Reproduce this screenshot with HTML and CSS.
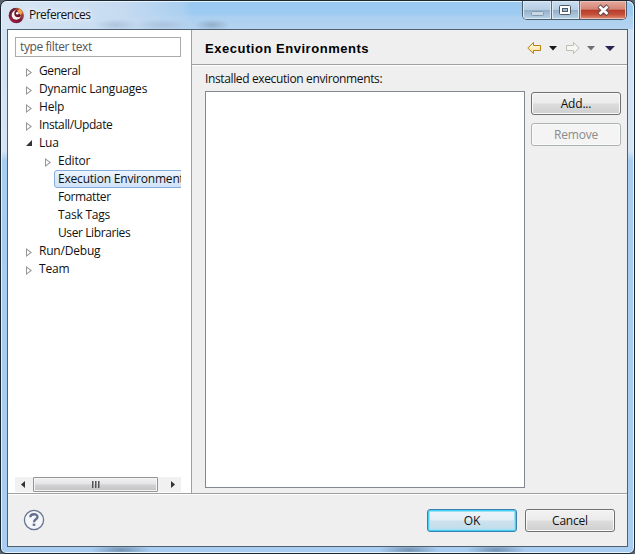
FILE: index.html
```html
<!DOCTYPE html>
<html lang="en">
<head>
<meta charset="utf-8">
<title>Preferences</title>
<link rel="stylesheet" href="styles.css">
</head>
<body>
<div class="window">
  <header class="titlebar">
    <svg class="logo" width="17" height="17" viewBox="0 0 17 17">
      <defs><linearGradient id="lg" x1="0" y1="1" x2="1" y2="0"><stop offset="0" stop-color="#b02848"/><stop offset=".45" stop-color="#74183a"/><stop offset=".75" stop-color="#a84838"/><stop offset="1" stop-color="#f0a040"/></linearGradient></defs>
      <circle cx="8.300" cy="8.500" r="7.700" fill="url(#lg)"/>
      <path d="M1.500 5.500A7.500 7.500 0 0 1 8 1L5 5L2.500 10Z" fill="#6a2036"/>
      <circle cx="8.300" cy="8" r="4.700" fill="#fff3ee"/>
      <circle cx="10" cy="6.500" r="3.700" fill="#6b1730"/>
      <path d="M9 3.500L12 2L14.500 5L13 8.500L11 6.500Z" fill="#f0a54c"/>
      <circle cx="9.300" cy="6.300" r="1.300" fill="#fff"/>
    </svg>
    <span class="title">Preferences</span>
    <div class="captions">
      <span class="cap min"><svg width="28" height="18"><rect x="8.500" y="10.500" width="12" height="4" rx="1" fill="#c9d9e6" stroke="#8498ab"/></svg></span>
      <span class="cap max"><svg width="27" height="18"><rect x="7.500" y="4.500" width="11" height="9" rx="1" fill="#fff" stroke="#4e5a68"/><rect x="10.500" y="7.500" width="5" height="3" fill="#9fb9cf" stroke="#4e5a68"/></svg></span>
      <span class="cap close"><svg width="46" height="18"><path d="M19 5L28 13.500M28 5L19 13.500" stroke="#64474a" stroke-width="4.500"/><path d="M19.500 5.500L27.500 13M27.500 5.500L19.500 13" stroke="#fff" stroke-width="2.700"/></svg></span>
    </div>
  </header>
  <main class="client">
    <div class="body">
      <aside class="sidebar">
        <div class="filter">type filter text</div>
        <ul class="tree">
          <li><i class="tw"></i><span class="tight">General</span></li>
          <li><i class="tw"></i><span>Dynamic Languages</span></li>
          <li><i class="tw"></i><span>Help</span></li>
          <li><i class="tw"></i><span class="tight">Install/Update</span></li>
          <li><i class="tw open"></i><span>Lua</span></li>
          <li class="sub"><i class="tw"></i><span>Editor</span></li>
          <li class="sub sel"><i class="tw none"></i><span>Execution Environments</span></li>
          <li class="sub"><i class="tw none"></i><span class="tight">Formatter</span></li>
          <li class="sub"><i class="tw none"></i><span>Task Tags</span></li>
          <li class="sub"><i class="tw none"></i><span class="tight">User Libraries</span></li>
          <li><i class="tw"></i><span>Run/Debug</span></li>
          <li><i class="tw"></i><span>Team</span></li>
        </ul>
        <div class="scroll">
          <svg width="18" height="15"><path d="M10 4V11L6 7.500Z" fill="#333"/></svg>
          <div class="thumb"><i></i><i></i><i></i></div>
          <svg width="23" height="15"><path d="M13 4V11L17 7.500Z" fill="#333"/></svg>
        </div>
      </aside>
      <section class="page">
        <div class="head">
          <h1>Execution Environments</h1>
          <svg class="nav" width="100" height="20" viewBox="0 0 100 20">
            <defs><linearGradient id="ag" x1="0" y1="0" x2="0" y2="1"><stop offset="0" stop-color="#fffdf0"/><stop offset="1" stop-color="#fbe08c"/></linearGradient></defs>
            <path d="M6.500 4.500L.8 10L6.500 15.500V12.500H13.500V7.500H6.500Z" fill="url(#ag)" stroke="#b98018"/>
            <path d="M22 8H30L26 12.500Z" fill="#181818"/>
            <path d="M46.500 4.500L52.200 10L46.500 15.500V12.500H39.500V7.500H46.500Z" fill="#f6f6f3" stroke="#bdbdb8"/>
            <path d="M60 8H68L64 12.500Z" fill="#6f6f6f"/>
            <path d="M78 8H88L83 13Z" fill="#25254f"/>
          </svg>
        </div>
        <div class="content">
          <div class="label">Installed execution environments:</div>
          <div class="cols">
            <div class="list"></div>
            <div class="actions">
              <button class="btn">Add...</button>
              <button class="btn off" disabled>Remove</button>
            </div>
          </div>
        </div>
      </section>
    </div>
    <footer class="foot">
      <svg class="help" width="22" height="22" viewBox="0 0 22 22"><circle cx="11" cy="11" r="9.600" fill="#f4f6fa" stroke="#66758f" stroke-width="1.300"/><path d="M7.300 8.200C7.500 4.300 14.500 4.300 14.500 8C14.500 10.300 11 10.300 11 13.200" fill="none" stroke="#60718f" stroke-width="2.300"/><rect x="9.700" y="14.600" width="2.600" height="2.300" fill="#60718f"/></svg>
      <button class="btn ok">OK</button>
      <button class="btn">Cancel</button>
    </footer>
  </main>
</div>
</body>
</html>
```
FILE: styles.css
```css
* { box-sizing: border-box; }
body {
  margin: 0;
  width: 635px;
  height: 554px;
  overflow: hidden;
  background: #59636d;
  font: 12px/18px "Open Sans", "Noto Sans", sans-serif;
  letter-spacing: -0.2px;
  color: #111;
}
.window {
  width: 635px;
  height: 554px;
  padding: 0 6px 6px 6px;
  border: 1px solid #1c2630;
  border-radius: 7px 7px 6px 6px;
  box-shadow: inset 0 0 0 1px #e4f2fc;
  background:
    radial-gradient(ellipse 30px 6px at 120px 549px, #7592b0, transparent),
    radial-gradient(ellipse 30px 6px at 408px 549px, #7592b0, transparent),
    radial-gradient(ellipse 30px 6px at 495px 549px, #7592b0, transparent),
    linear-gradient(#cfe1f4, #d5e5f6 150px, #a6cdf2 160px, #a9cdf0);
}
.titlebar {
  display: flex;
  align-items: flex-start;
  height: 28px;
  margin: 0 -5px;
  padding-left: 6px;
  border-radius: 6px 6px 0 0;
  border-top: 1px solid #e8f4fc;
  background:
    radial-gradient(ellipse 22px 6px at 114px 23px, #a3b9d4aa, transparent),
    radial-gradient(ellipse 28px 6px at 160px 23px, #a3b9d4aa, transparent),
    radial-gradient(ellipse 18px 6px at 210px 23px, #8ba5c2cc, transparent),
    linear-gradient(90deg, #d8e6f4, #c6dbf1 120px, #b8d4f088 180px, transparent 190px),
    linear-gradient(#98c8f0, #9ecbf2 12px, #acd0f0 15px, #b4d3f0);
}
.logo { margin: 5px 4px 0 0; }
.title { padding-top: 4px; letter-spacing: -0.5px; text-shadow: 0 0 5px #fff, 0 0 8px #fff; }
.captions {
  display: flex;
  margin: -1px 6px 0 auto;
  height: 19px;
  border: 1px solid #4a5b6c;
  border-top: 0;
  border-radius: 0 0 5px 5px;
  overflow: hidden;
}
.cap { display: flex; box-shadow: inset 0 0 0 1px #dceaf6; }
.min, .max { border-right: 1px solid #5b6c7d; background: linear-gradient(#cadef0, #b6cde2 48%, #94b0c9 52%, #b9d3e8); }
.close { background: linear-gradient(#e5aa9d, #d38576 46%, #b73a28 50%, #c5503a 75%, #e29176); box-shadow: inset 0 0 0 1px #ecc0b6; }
.client { display: flex; flex-direction: column; height: 518px; border: 1px solid #4e6072; background: #efefef; }
.body { display: flex; height: 464px; border-bottom: 1px solid #a0a0a0; }
.sidebar { width: 184px; padding: 7px 10px 0 7px; border-right: 1px solid #a0a0a0; background: #fff; display: flex; flex-direction: column; }
.filter { height: 20px; padding-left: 4px; border: 1px solid #ababab; color: #555; letter-spacing: -0.4px; }
.tree { list-style: none; margin: 5px 0 0; padding: 0; overflow: hidden; }
.tree li { display: flex; height: 18px; padding-left: 10px; white-space: nowrap; }
.tree .sub { padding-left: 29px; }
.tight { letter-spacing: -0.4px; }
.tw { width: 14px; flex: none; display: flex; }
.tw::before { content: ""; width: 6px; height: 9px; margin: 6px 0 0 1px; background: #969696; clip-path: polygon(0 0, 100% 50%, 0 100%, 0 0, 1px 2px, 1px 7px, 4.3px 4.5px, 1px 2px); }
.tw.open::before { width: 6px; height: 6px; margin-top: 6px; background: #333; clip-path: polygon(100% 0, 100% 100%, 0 100%); }
.tw.none::before { display: none; }
.sel span { width: 130px; margin-left: -4px; padding-left: 3px; line-height: 16px; border: 1px solid #84acdd; border-radius: 3px; background: linear-gradient(#edf4fd, #d0e2f9); }
.scroll { display: flex; height: 15px; margin: auto 0 1px; background: #f1f1f1; }
.thumb { width: 125px; border: 1px solid #959595; border-radius: 1px; box-shadow: inset 0 0 0 1px #f5f5f5; background: linear-gradient(#f2f2f2, #e4e4e6 48%, #d2d2d4 52%, #c3c3c6); display: flex; justify-content: center; gap: 1px; padding-top: 3px; }
.thumb i { width: 2px; height: 7px; background: linear-gradient(90deg, #555 50%, #999 50%); }
.page { flex: 1; display: flex; flex-direction: column; }
.head { display: flex; justify-content: space-between; height: 35px; border-bottom: 1px solid #a0a0a0; padding: 8px 0 0 13px; }
h1 { margin: 1px 0 0; font: bold 13px/19px "Liberation Sans", Arial, sans-serif; letter-spacing: 0.53px; color: #000; }
.content { border-top: 1px solid #fff; padding: 4px 6px 0 13px; }
.label { height: 21px; letter-spacing: -0.37px; white-space: nowrap; }
.cols { display: flex; gap: 6px; }
.list { width: 320px; height: 397px; border: 1px solid #828790; background: #fff; }
.actions { display: flex; flex-direction: column; gap: 8px; padding-top: 1px; }
.btn { width: 90px; height: 23px; padding: 0; border: 1px solid #707070; border-radius: 3px; box-shadow: inset 0 0 0 1px #fafafa; background: linear-gradient(#f2f2f2, #ebebeb 48%, #dddddd 52%, #cfcfcf); font: inherit; letter-spacing: -0.2px; color: #111; }
.off { color: #8b8b8b; border-color: #adb2b5; background: #f4f4f4; }
.foot { flex: 1; display: flex; gap: 8px; padding: 14px 12px 0 15px; border-top: 1px solid #fff; }
.help { margin-right: auto; }
.ok { border-color: #3c7fb1; box-shadow: inset 0 0 0 1px #46d0f5, inset 0 0 0 2px #9be2f5; background: linear-gradient(#eef5f9, #e2eef5 48%, #cde1ec 52%, #bfdcec); }
```
